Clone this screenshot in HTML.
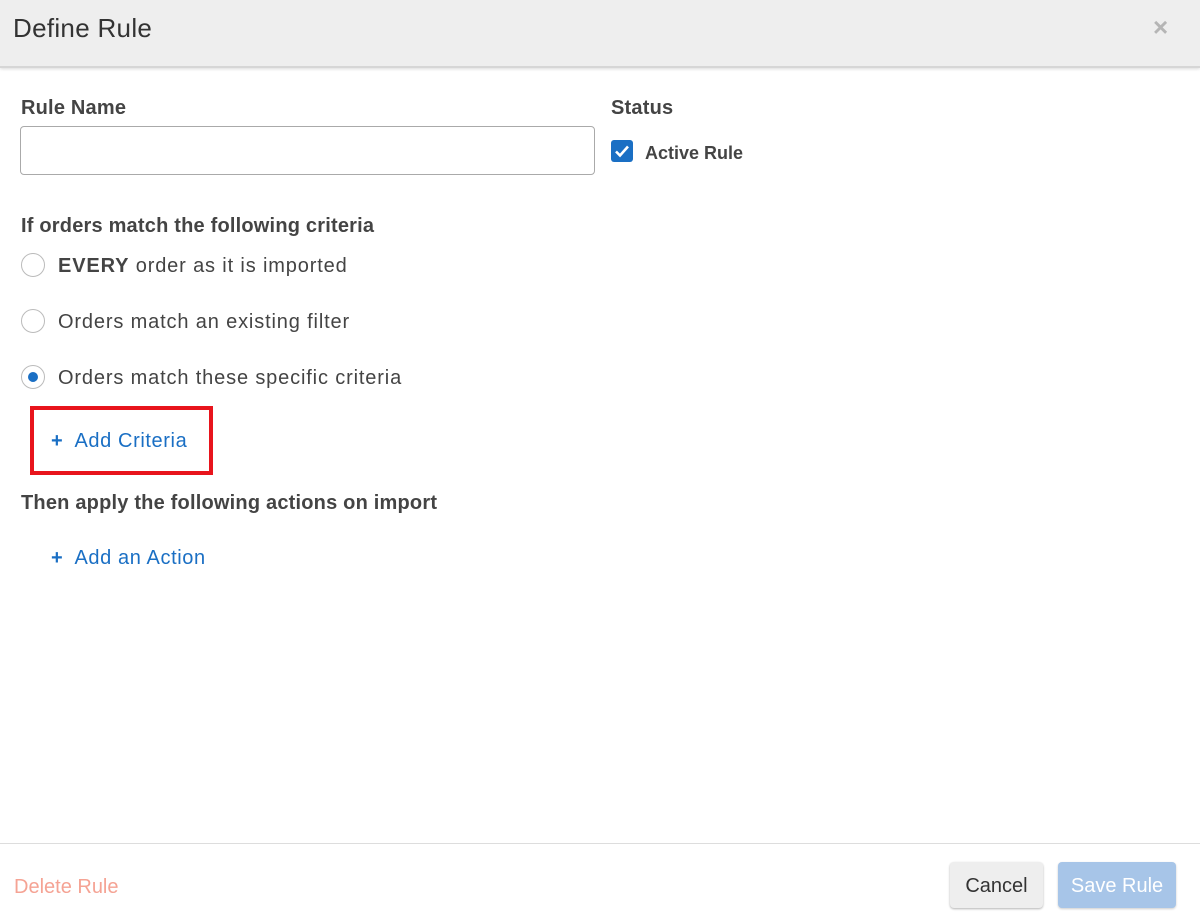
<!DOCTYPE html>
<html><head><style>
body{margin:0;width:1200px;height:916px;background:#fff;font-family:"Liberation Sans",sans-serif;color:#444;position:relative;overflow:hidden}
.a{position:absolute;white-space:nowrap}
.hdr{position:absolute;left:0;top:0;width:1200px;height:66px;background:#eeeeee;border-bottom:2px solid #d6d6d6;box-shadow:0 1px 3px rgba(0,0,0,.15)}
.lbl{font-size:20px;font-weight:bold;color:#444;letter-spacing:0.2px}
.radio{position:absolute;left:21px;width:24px;height:24px;border:1.5px solid #bbb;border-radius:50%;box-sizing:border-box;background:#fff}
.rt{font-size:20px;color:#444;left:58px;letter-spacing:0.85px}
.link{font-size:20px;color:#1a6fc4;letter-spacing:0.6px}
</style></head><body>
<div class="hdr"></div>
<div class="a" style="left:13px;top:13px;font-size:26px;color:#333;letter-spacing:0.3px">Define Rule</div>
<div class="a" style="left:1153px;top:12px;font-size:26px;color:#b5b5b5;font-weight:bold">×</div>

<div class="a lbl" style="left:21px;top:97px">Rule Name</div>
<div class="a" style="left:20px;top:126px;width:575px;height:49px;border:1.5px solid #aaa;border-radius:4px;box-sizing:border-box"></div>
<div class="a lbl" style="left:611px;top:97px">Status</div>
<div class="a" style="left:611px;top:140px;width:22px;height:22px;background:#1a6fc4;border-radius:3px"><svg width="22" height="22" viewBox="0 0 22 22"><path d="M5 11.5l4 4 8-9" fill="none" stroke="#fff" stroke-width="2.6"/></svg></div>
<div class="a" style="left:645px;top:143px;font-size:18px;font-weight:bold;color:#444">Active Rule</div>

<div class="a lbl" style="left:21px;top:215px">If orders match the following criteria</div>
<div class="radio" style="top:253px"></div>
<div class="a rt" style="top:255px"><b>EVERY</b> order as it is imported</div>
<div class="radio" style="top:309px"></div>
<div class="a rt" style="top:311px">Orders match an existing filter</div>
<div class="radio" style="top:365px"><div style="position:absolute;left:5.5px;top:5.5px;width:10px;height:10px;border-radius:50%;background:#1a6fc4"></div></div>
<div class="a rt" style="top:367px">Orders match these specific criteria</div>

<div class="a" style="left:30px;top:406px;width:183px;height:69px;border:4px solid #e8141c;box-sizing:border-box"></div>
<div class="a link" style="left:51px;top:430px"><b>+</b>&nbsp; Add Criteria</div>

<div class="a lbl" style="left:21px;top:492px">Then apply the following actions on import</div>
<div class="a link" style="left:51px;top:547px"><b>+</b>&nbsp; Add an Action</div>

<div class="a" style="left:0;top:843px;width:1200px;height:1px;background:#ddd"></div>
<div class="a" style="left:14px;top:876px;font-size:20px;color:#f5a394">Delete Rule</div>
<div class="a" style="left:950px;top:862px;width:93px;height:46px;background:#eee;border-radius:4px;box-shadow:0 1px 2px rgba(0,0,0,.3);font-size:20px;color:#333;text-align:center;line-height:48px">Cancel</div>
<div class="a" style="left:1058px;top:862px;width:118px;height:46px;background:#a7c5e8;border-radius:4px;box-shadow:0 1px 2px rgba(0,0,0,.2);font-size:20px;color:#fff;text-align:center;line-height:48px">Save Rule</div>
</body></html>
